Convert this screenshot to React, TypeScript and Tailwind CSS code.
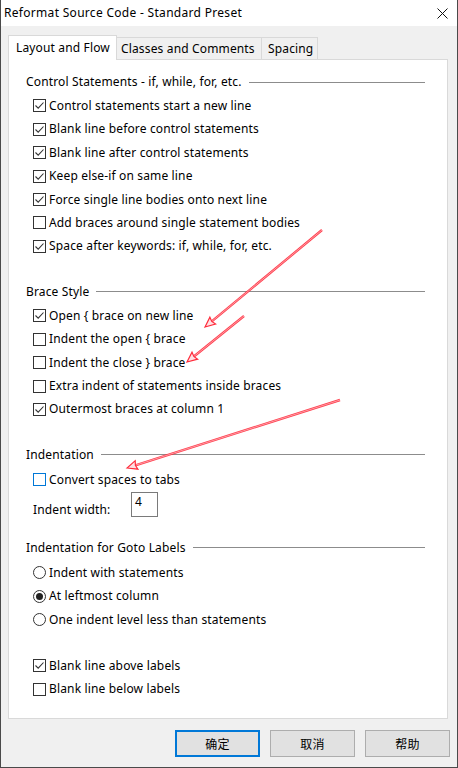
import React from "react";

const font = { fontFamily: '"Noto Sans", "Noto Sans CJK SC", sans-serif' };

function CheckBox({ checked, focus }: { checked?: boolean; focus?: boolean }) {
  return (
    <div
      className={`w-[13px] h-[13px] border ${focus ? "border-[#0078d7]" : "border-[#333333]"} bg-white flex items-center justify-center shrink-0`}
    >
      {checked && (
        <svg width="11" height="11" viewBox="0 0 11 11">
          <path d="M1.5 5.5 L4.2 8.2 L9.5 2.5" fill="none" stroke="#333333" strokeWidth="1.1" />
        </svg>
      )}
    </div>
  );
}

function Radio({ checked }: { checked?: boolean }) {
  return (
    <svg width="13" height="13" viewBox="0 0 13 13" className="shrink-0">
      <circle cx="6.5" cy="6.5" r="6" fill="white" stroke="#333333" strokeWidth="1" />
      {checked && <circle cx="6.5" cy="6.5" r="3.5" fill="#222222" />}
    </svg>
  );
}

function Item({ label, checked, radio, focus }: { label: string; checked?: boolean; radio?: boolean; focus?: boolean }) {
  return (
    <div className="h-[23.4px] flex items-center gap-[3px] pl-[7px]">
      {radio ? <Radio checked={checked} /> : <CheckBox checked={checked} focus={focus} />}
      <span className="leading-none">{label}</span>
    </div>
  );
}

function Header({ label, className = "" }: { label: string; className?: string }) {
  return (
    <div className={`h-[20px] flex items-center ${className}`}>
      <span className="leading-none">{label}</span>
      <div className="flex-1 h-px bg-[#8c8c8c] ml-[7px]" />
    </div>
  );
}

function Arrow({ x1, y1, x2, y2 }: { x1: number; y1: number; x2: number; y2: number }) {
  const dx = x2 - x1;
  const dy = y2 - y1;
  const len = Math.sqrt(dx * dx + dy * dy);
  const ux = dx / len;
  const uy = dy / len;
  const L = 11;
  const a = 0.42;
  const cos = Math.cos(a);
  const sin = Math.sin(a);
  const lx = x2 - L * (ux * cos - uy * sin);
  const ly = y2 - L * (uy * cos + ux * sin);
  const rx = x2 - L * (ux * cos + uy * sin);
  const ry = y2 - L * (uy * cos - ux * sin);
  const bx = x2 - L * 0.8 * ux;
  const by = y2 - L * 0.8 * uy;
  return (
    <g>
      <line x1={x1} y1={y1} x2={bx} y2={by} stroke="#ff2a3a" strokeWidth="2.4" strokeOpacity="0.9" />
      <line x1={x1} y1={y1} x2={bx} y2={by} stroke="#ffc0c8" strokeWidth="0.7" />
      <polygon points={`${x2},${y2} ${lx},${ly} ${bx},${by} ${rx},${ry}`} fill="#ffe0e4" stroke="#ff2a3a" strokeWidth="1.2" strokeLinejoin="miter" />
    </g>
  );
}

export default function App() {
  return (
    <div
      className="relative w-[458px] h-[768px] bg-[#f0f0f0] border-l border-r border-b border-[#4a4a4a] flex flex-col text-[12px] tracking-[0.15px] text-black overflow-hidden"
      style={font}
    >
      {/* Title bar */}
      <div className="h-[26px] bg-white flex items-center pl-[3px] shrink-0">
        <span className="leading-none flex-1 text-[12px] tracking-[0.3px]">Reformat Source Code - Standard Preset</span>
        <svg width="11" height="11" viewBox="0 0 11 11" className="mr-[9px]">
          <path d="M0.5 0.5 L10.5 10.5 M10.5 0.5 L0.5 10.5" stroke="#111" strokeWidth="1" />
        </svg>
      </div>

      {/* Tabs */}
      <div className="mt-[9px] ml-[7px] h-[24px] flex items-end">
        <div className="relative z-10 -mb-px h-[25px] w-[109px] bg-white border-t border-l border-r border-[#d9d9d9] flex items-center pl-[7px]">
          <span className="leading-none -mt-[1px]">Layout and Flow</span>
        </div>
        <div className="h-[22px] w-[145px] border-t border-r border-[#d9d9d9] flex items-center pl-[4px]">
          <span className="leading-none">Classes and Comments</span>
        </div>
        <div className="h-[22px] w-[56px] border-t border-r border-[#d9d9d9] flex items-center pl-[6px]">
          <span className="leading-none">Spacing</span>
        </div>
      </div>

      {/* Panel */}
      <div className="ml-[7px] w-[440px] h-[660px] bg-white border border-[#d9d9d9] pt-[12px] pl-[17px] pr-[22px] flex flex-col">
        <Header label="Control Statements - if, while, for, etc." />
        <div className="mt-[2.3px]">
          <Item label="Control statements start a new line" checked />
          <Item label="Blank line before control statements" checked />
          <Item label="Blank line after control statements" checked />
          <Item label="Keep else-if on same line" checked />
          <Item label="Force single line bodies onto next line" checked />
          <Item label="Add braces around single statement bodies" />
          <Item label="Space after keywords: if, while, for, etc." checked />
        </div>

        <Header label="Brace Style" className="mt-[23.9px]" />
        <div className="mt-[2.3px]">
          <Item label="Open { brace on new line" checked />
          <Item label="Indent the open { brace" />
          <Item label="Indent the close } brace" />
          <Item label="Extra indent of statements inside braces" />
          <Item label="Outermost braces at column 1" checked />
        </div>

        <Header label="Indentation" className="mt-[23.7px]" />
        <div className="mt-[3.3px]">
          <Item label="Convert spaces to tabs" focus />
        </div>
        <div className="mt-[0.3px] h-[25px] flex pl-[7px]">
          <span className="leading-none self-end mb-[1px] w-[98px]">Indent width:</span>
          <div className="w-[27px] h-[25px] border border-[#7a7a7a] bg-white pl-[3px] pt-[3px] leading-none">4</div>
        </div>

        <Header label="Indentation for Goto Labels" className="mt-[21px]" />
        <div className="mt-[3.3px]">
          <Item label="Indent with statements" radio />
          <Item label="At leftmost column" radio checked />
          <Item label="One indent level less than statements" radio />
        </div>

        <div className="mt-[22.8px]">
          <Item label="Blank line above labels" checked />
          <Item label="Blank line below labels" />
        </div>
      </div>

      {/* Buttons */}
      <div className="mt-[11px] flex justify-end gap-[10px] pr-[7px]" style={{ fontFamily: '"Noto Sans CJK SC", sans-serif' }}>
        <div className="w-[85px] h-[27px] bg-[#e1e1e1] border-2 border-[#0078d7] flex items-center justify-center leading-none">确定</div>
        <div className="w-[85px] h-[27px] bg-[#e1e1e1] border border-[#adadad] flex items-center justify-center leading-none">取消</div>
        <div className="w-[85px] h-[27px] bg-[#e1e1e1] border border-[#adadad] flex items-center justify-center leading-none">帮助</div>
      </div>

      {/* Annotation arrows */}
      <svg className="absolute left-[-1px] top-0 pointer-events-none" width="458" height="768">
        <Arrow x1={322} y1={230} x2={205} y2={327} />
        <Arrow x1={244} y1={316} x2={187} y2={362} />
        <Arrow x1={340} y1={400} x2={127} y2={468} />
      </svg>
    </div>
  );
}
